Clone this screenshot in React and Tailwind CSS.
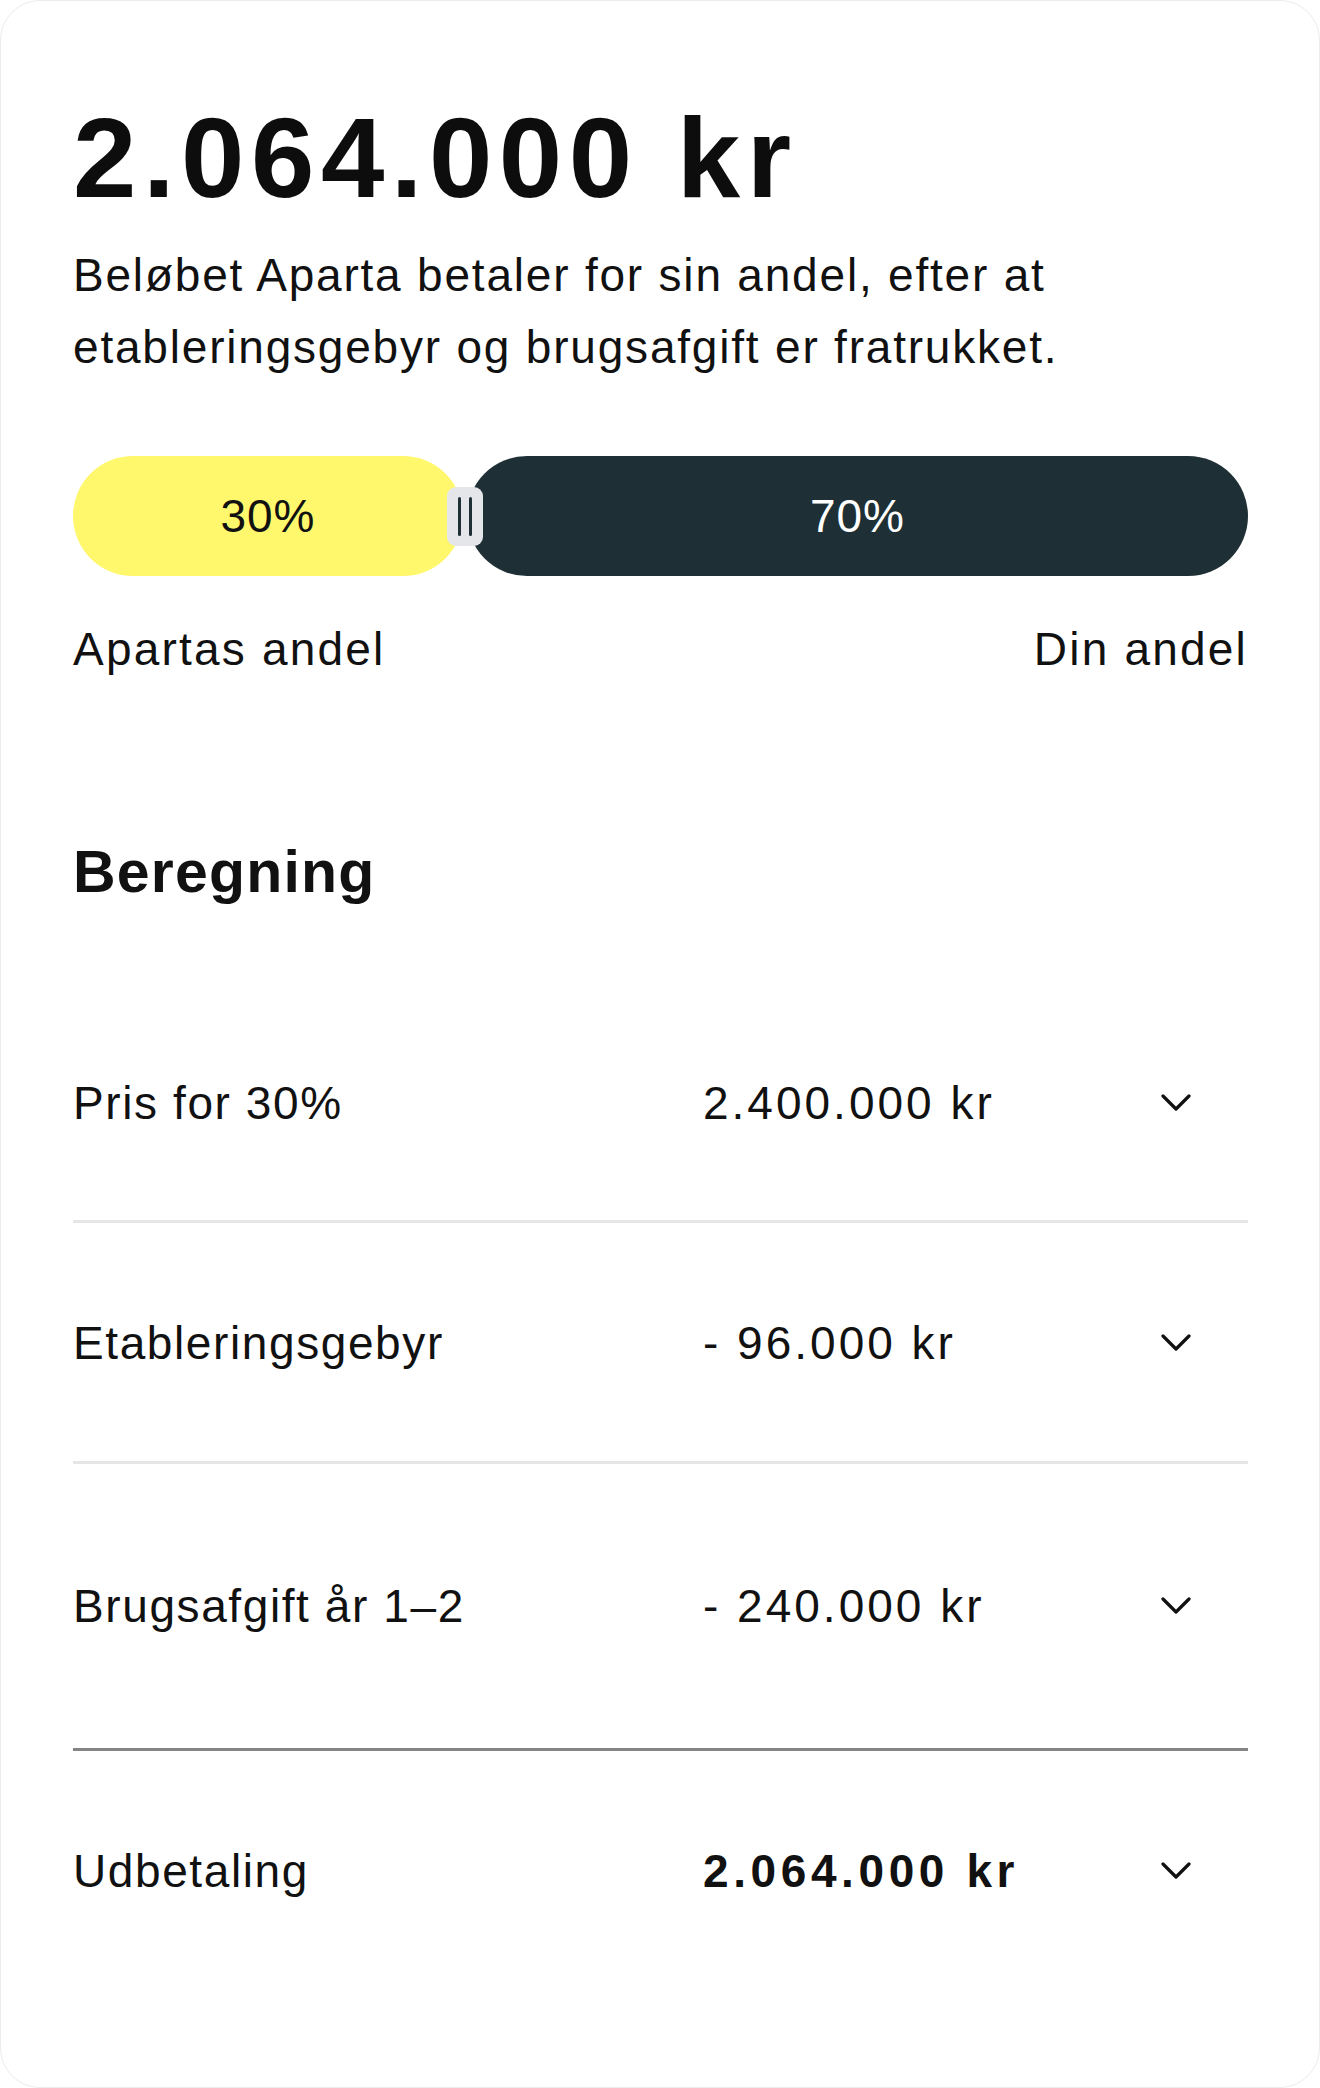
import React from 'react';

// Payout breakdown card: headline amount, share split slider and the calculation rows.
const ROWS = [
  { label: 'Pris for 30%', value: '2.400.000 kr', pad: 'pt-[96px] pb-[93px]', line: 'border-b-[3px] border-[#e6e6e6]' },
  { label: 'Etableringsgebyr', value: '- 96.000 kr', pad: 'pt-[96px] pb-[94px]', line: 'border-b-[3px] border-[#e6e6e6]' },
  { label: 'Brugsafgift år 1–2', value: '- 240.000 kr', pad: 'pt-[118px] pb-[118px]', line: 'border-b-[3px] border-[#858585]' },
  { label: 'Udbetaling', value: '2.064.000 kr', pad: 'pt-[96px] pb-[96px]', line: '', bold: true },
];

function Chevron() {
  return (
    <svg width="30" height="18" viewBox="0 0 30 18" fill="none">
      <polyline points="2,2 15,15 28,2" stroke="#111111" strokeWidth="3.2" strokeLinecap="round" strokeLinejoin="round" />
    </svg>
  );
}

function ShareBar() {
  return (
    <div className="relative mt-[73px] flex h-[120px] gap-[4px]">
      <div className="flex w-[390px] items-center justify-center rounded-full bg-[#fff86c] text-[46px] leading-none tracking-[1px] text-[#111111]">
        30%
      </div>
      <div className="flex flex-1 items-center justify-center rounded-full bg-[#1e3035] text-[46px] leading-none tracking-[1px] text-white">
        70%
      </div>
      {/* drag handle on the split */}
      <div className="absolute left-[374px] top-[31px] flex h-[59px] w-[36px] items-center justify-center gap-[8px] rounded-[9px] bg-[#e4e6ea]">
        <span className="h-[39px] w-[3px] rounded-full bg-[#1e3035]" />
        <span className="h-[39px] w-[3px] rounded-full bg-[#1e3035]" />
      </div>
    </div>
  );
}

export default function App() {
  return (
    <div className="min-h-[2088px] w-[1320px] bg-white font-['Liberation_Sans',Arial,sans-serif] text-[#111111]">
      <div className="min-h-[2088px] rounded-[40px] border border-[#ececec] bg-white pl-[72px] pr-[71px] pt-[100px]">
        <h1 className="text-[114px] font-bold leading-none tracking-[6.5px] text-[#0d0d0d]">2.064.000 kr</h1>
        <p className="mt-[24px] text-[46px] leading-[72px] tracking-[1.8px]">
          Beløbet Aparta betaler for sin andel, efter at
          <br />
          etableringsgebyr og brugsafgift er fratrukket.
        </p>

        <ShareBar />

        <div className="mt-[45px] flex justify-between text-[46px] leading-[56px] tracking-[2.2px]">
          <span>Apartas andel</span>
          <span>Din andel</span>
        </div>

        <h2 className="mt-[161px] text-[59px] font-bold leading-[68px] tracking-[1.2px]">Beregning</h2>

        <div className="mt-[77px]">
          {ROWS.map((row) => (
            <div key={row.label} className={`flex items-center ${row.pad} ${row.line}`}>
              <span className="w-[630px] text-[46px] leading-[48px] tracking-[1.6px]">{row.label}</span>
              <span
                className={`flex-1 text-[46px] leading-[48px] ${row.bold ? 'font-bold tracking-[4.6px]' : 'tracking-[3px]'}`}
              >
                {row.value}
              </span>
              <span className="flex w-[144px] justify-center">
                <Chevron />
              </span>
            </div>
          ))}
        </div>
      </div>
    </div>
  );
}
